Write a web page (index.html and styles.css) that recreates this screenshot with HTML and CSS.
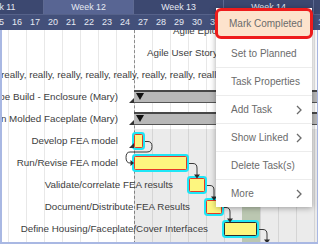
FILE: index.html
```html
<!DOCTYPE html>
<html>
<head>
<meta charset="utf-8">
<link rel="stylesheet" href="styles.css">
</head>
<body>
<div class="gantt">
  <div class="timescale">
    <div class="weeks">
      <div class="week">Week 11</div>
      <div class="week current">Week 12</div>
      <div class="week">Week 13</div>
      <div class="week">Week 14</div>
      <div class="week">Week 15</div>
    </div>
    <div class="days">
      <div class="day">15</div><div class="day">16</div><div class="day">17</div>
      <div class="day">20</div><div class="day">21</div><div class="day">22</div><div class="day">23</div><div class="day">24</div>
      <div class="day">27</div><div class="day">28</div><div class="day">29</div><div class="day">30</div><div class="day">31</div>
      <div class="day">3</div><div class="day">4</div><div class="day">5</div><div class="day">6</div><div class="day">7</div>
      <div class="day">10</div>
    </div>
  </div>

  <div class="chart">
    <div class="band" style="left:242px"></div>
    <div class="today-line"></div>
    <div class="rows">
      <div class="row"><span class="label" style="left:173px">Agile Epic</span></div>
      <div class="row"><span class="label" style="left:147px">Agile User Story</span></div>
      <div class="row"><span class="label" style="left:1px">really, really, really, really, really, really, really, really</span></div>
      <div class="row">
        <span class="label" style="right:200px">Prototype Build - Enclosure (Mary)</span>
        <div class="bar summary" style="left:134px"><span class="marker"></span><span class="caret"></span></div>
      </div>
      <div class="row">
        <span class="label" style="right:200px">Prototype Injection Molded Faceplate (Mary)</span>
        <div class="bar summary" style="left:134px"><span class="marker"></span><span class="caret"></span></div>
      </div>
      <div class="row sel">
        <span class="label" style="right:200px">Develop FEA model</span>
        <div class="bar task" style="left:134px;width:9px"><span class="marker"></span></div>
      </div>
      <div class="row sel">
        <span class="label" style="right:200px">Run/Revise FEA model</span>
        <div class="bar task" style="left:134px;width:53px"></div>
      </div>
      <div class="row sel">
        <span class="label" style="right:145px">Validate/correlate FEA results</span>
        <div class="bar task" style="left:189px;width:16px"></div>
      </div>
      <div class="row sel">
        <span class="label" style="right:128px">Document/Distribute FEA Results</span>
        <div class="bar task" style="left:206px;width:16px"></div>
      </div>
      <div class="row sel">
        <span class="label" style="right:110px">Define Housing/Faceplate/Cover Interfaces</span>
        <div class="bar task dark" style="left:224px;width:33px"></div>
      </div>
      <div class="row sel"></div>
    </div>
    <svg class="links" width="318" height="214" viewBox="0 30 318 214">
      <g fill="none" stroke="#3a3a3a" stroke-width="1">
        <path d="M145 141.5 H148 Q152 141.5 152 146.5 Q152 152 147 152 H130 Q126 152 126 157.5 Q126 163 130 163 H131"/>
        <path d="M189 163.5 H193 Q197 163.5 197 168 V175"/>
        <path d="M207 185.5 H210 Q214 185.5 214 190 V197"/>
        <path d="M224 207.5 H226 Q230 207.5 230 212 V219"/>
        <path d="M259 229.5 H263 Q267 229.5 267 234 V240"/>
      </g>
      <g fill="#2a2a2a">
        <polygon points="130.5,160 134,163 130.5,166"/>
        <polygon points="194,174.5 200,174.5 197,178.5"/>
        <polygon points="211,196.5 217,196.5 214,200.5"/>
        <polygon points="227,218.5 233,218.5 230,222.5"/>
        <polygon points="264,239.5 270,239.5 267,243.5"/>
      </g>
    </svg>
  </div>

  <div class="menu">
    <div class="item active"><span>Mark Completed</span></div>
    <div class="item"><span>Set to Planned</span></div>
    <div class="item"><span>Task Properties</span></div>
    <div class="item"><span>Add Task</span><svg class="chev" width="6" height="10" viewBox="0 0 6 10"><polyline points="1,1 5,5 1,9"/></svg></div>
    <div class="item"><span>Show Linked</span><svg class="chev" width="6" height="10" viewBox="0 0 6 10"><polyline points="1,1 5,5 1,9"/></svg></div>
    <div class="item"><span>Delete Task(s)</span></div>
    <div class="item"><span>More</span><svg class="chev" width="6" height="10" viewBox="0 0 6 10"><polyline points="1,1 5,5 1,9"/></svg></div>
  </div>
</div>
</body>
</html>
```

FILE: styles.css
```css
* { box-sizing: border-box; margin: 0; padding: 0; }

body {
  margin: 0;
  background: #fff;
  font-family: "Liberation Sans", Arial, sans-serif;
}

.gantt {
  position: relative;
  width: 320px;
  height: 244px;
  overflow: hidden;
  background: #fff;
}

/* ---------- time scale ---------- */
.timescale {
  position: relative;
  z-index: 3;
  height: 30px;
  overflow: hidden;
}

.weeks {
  display: flex;
  height: 15px;
  margin-left: -46px;
  background: #3c4870;
  border-bottom: 1px solid #56628a;
}

.week {
  flex: 0 0 90px;
  border-right: 1px solid #5e6a92;
  color: #e6eaf4;
  font-size: 8.8px;
  line-height: 14px;
  text-align: center;
  white-space: nowrap;
}

.week.current { background: #586593; }

.days {
  display: flex;
  height: 15px;
  margin-left: -10px;
  background: #43507a;
}

.day {
  flex: 0 0 18px;
  color: #e6eaf4;
  font-size: 9px;
  line-height: 15px;
  text-align: center;
}

/* ---------- chart ---------- */
.chart {
  position: relative;
  width: 318px;
  height: 214px;
  overflow: hidden;
  background-color: #fff;
  background-image: linear-gradient(to right, transparent 17px, #e8e8e8 17px);
  background-size: 18px 100%;
  background-position: 9px 0;
}

.chart::after {
  content: "";
  position: absolute;
  inset: 0;
  border-left: 2px solid #a9b8e3;
  border-right: 1px solid #a9b8e3;
  border-bottom: 2px solid #a9b8e3;
  pointer-events: none;
  z-index: 5;
}

.band {
  position: absolute;
  top: 0;
  bottom: 0;
  width: 18px;
  background: #cbd8c0;
}

.today-line {
  position: absolute;
  top: 0;
  bottom: 0;
  left: 134px;
  border-left: 1px dashed #8c8c8c;
}

.rows {
  position: relative;
  margin-top: -11px;
}

.row {
  position: relative;
  height: 22px;
}

.row.sel::before {
  content: "";
  position: absolute;
  left: 134px;
  right: 0;
  top: 0;
  bottom: 0;
  background: rgba(0, 0, 0, 0.08);
}

.label {
  position: absolute;
  top: 1px;
  line-height: 22px;
  font-size: 9.8px;
  color: #3d3d3d;
  white-space: nowrap;
}

.bar {
  position: absolute;
  top: 5px;
  height: 14px;
}

.task {
  background: #fdf67f;
  border: 1px solid #e5392a;
  border-radius: 1.5px;
  box-shadow: 0 0 0 2px #1ee6f6;
}

.task.dark { border-color: #2c2c2c; }

.summary {
  right: 0;
  height: 13px;
  background: #b8b8b8;
  border-top: 2px solid #474747;
  border-bottom: 1px solid #555;
}

.caret {
  position: absolute;
  left: 2px;
  top: 1px;
  width: 0;
  height: 0;
  border-left: 4px solid transparent;
  border-right: 4px solid transparent;
  border-top: 7px solid #111;
}

.marker {
  position: absolute;
  right: 100%;
  bottom: -1px;
  width: 0;
  height: 0;
  border-left: 5px solid transparent;
  border-bottom: 5px solid #333;
  z-index: 2;
}

.task .marker { margin-right: 1px; }

.links {
  position: absolute;
  left: 0;
  top: 0;
  z-index: 2;
}

/* ---------- context menu ---------- */
.menu {
  position: absolute;
  left: 216px;
  top: 8px;
  width: 96px;
  background: #fff;
  box-shadow: 0 1px 6px rgba(0, 0, 0, 0.35);
  z-index: 10;
  font-size: 10px;
  color: #6b6b6b;
}

.item {
  display: flex;
  align-items: center;
  justify-content: space-between;
  height: 28px;
  padding: 0 10px 0 15px;
  border-top: 1px solid #ececec;
  white-space: nowrap;
}

.item.active {
  height: 31px;
  margin: 0 -1px;
  padding: 0 2px 0 11px;
  border: 3px solid #ee1c1c;
  border-radius: 6px;
  background: #fde3cc;
}

.item.active + .item { border-top: none; }

.chev polyline {
  fill: none;
  stroke: #6b6b6b;
  stroke-width: 1.3;
}
```
